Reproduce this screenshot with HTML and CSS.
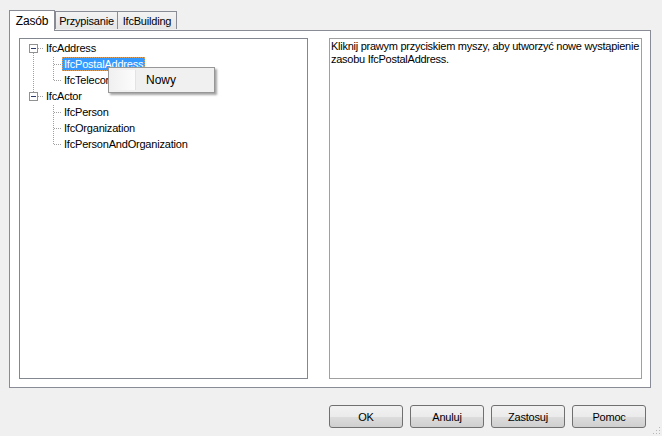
FILE: index.html
```html
<!DOCTYPE html>
<html>
<head>
    <meta charset="utf-8">
    <title>Zasób</title>
    <link rel="stylesheet" href="styles.css">
</head>
<body>
    <div class="dialog">
        <div class="tabs">
            <div class="tab active tab-zasob">Zasób</div>
            <div class="tab tab-przyp">Przypisanie</div>
            <div class="tab tab-bldg">IfcBuilding</div>
        </div>
        <div class="panel">
            <div class="tree">
                <svg class="tree-lines" width="120" height="120" viewBox="0 0 120 120">
                    <g stroke="#a0a0a0" stroke-dasharray="1,1" shape-rendering="crispEdges">
                        <line x1="13.5" y1="14" x2="13.5" y2="53"/>
                        <line x1="18" y1="9.5" x2="24" y2="9.5"/>
                        <line x1="18" y1="57.5" x2="24" y2="57.5"/>
                        <line x1="33.5" y1="18" x2="33.5" y2="42"/>
                        <line x1="34" y1="25.5" x2="42" y2="25.5"/>
                        <line x1="34" y1="41.5" x2="42" y2="41.5"/>
                        <line x1="33.5" y1="66" x2="33.5" y2="106"/>
                        <line x1="34" y1="73.5" x2="42" y2="73.5"/>
                        <line x1="34" y1="89.5" x2="42" y2="89.5"/>
                        <line x1="34" y1="105.5" x2="42" y2="105.5"/>
                    </g>
                    <g shape-rendering="crispEdges">
                        <rect x="9.5" y="5.5" width="8" height="8" fill="#fff" stroke="#919191"/>
                        <line x1="11" y1="9.5" x2="16" y2="9.5" stroke="#2a3a6a"/>
                        <rect x="9.5" y="53.5" width="8" height="8" fill="#fff" stroke="#919191"/>
                        <line x1="11" y1="57.5" x2="16" y2="57.5" stroke="#2a3a6a"/>
                    </g>
                </svg>
                <div class="node root"><span class="label">IfcAddress</span></div>
                <div class="node child"><span class="label selected">IfcPostalAddress</span></div>
                <div class="node child"><span class="label">IfcTelecomAddress</span></div>
                <div class="node root"><span class="label">IfcActor</span></div>
                <div class="node child"><span class="label">IfcPerson</span></div>
                <div class="node child"><span class="label">IfcOrganization</span></div>
                <div class="node child"><span class="label">IfcPersonAndOrganization</span></div>

                <div class="menu">
                    <div class="menu-item">
                        <span class="gutter"></span>
                        <span class="menu-text">Nowy</span>
                    </div>
                </div>
            </div>
            <div class="description">
                Kliknij prawym przyciskiem myszy, aby utworzyć nowe wystąpienie<br>zasobu IfcPostalAddress.
            </div>
        </div>
        <div class="buttons">
            <button class="btn">OK</button>
            <button class="btn">Anuluj</button>
            <button class="btn">Zastosuj</button>
            <button class="btn">Pomoc</button>
        </div>
    </div>
    <svg class="grip" width="12" height="12" viewBox="0 0 12 12">
        <g fill="#b8b8b8">
            <rect x="9" y="3" width="1" height="1"/>
            <rect x="6" y="6" width="1" height="1"/>
            <rect x="9" y="6" width="1" height="1"/>
            <rect x="3" y="9" width="1" height="1"/>
            <rect x="6" y="9" width="1" height="1"/>
            <rect x="9" y="9" width="1" height="1"/>
        </g>
    </svg>
</body>
</html>
```

FILE: styles.css
```css
html, body {
    margin: 0;
    padding: 0;
}
body {
    width: 662px;
    height: 436px;
    background-color: #f0f0f0;
    font-family: "Liberation Sans", Arial, sans-serif;
    font-size: 11px;
    letter-spacing: -0.2px;
    color: #000;
    overflow: hidden;
    position: relative;
}
.dialog {
    padding: 10px 0 0 9px;
}
.tabs {
    display: flex;
    align-items: flex-end;
    height: 20px;
}
.tab {
    box-sizing: border-box;
    height: 18px;
    border: 1px solid #898c95;
    border-bottom: none;
    background: linear-gradient(#f3f3f3, #e6e6e6);
    display: flex;
    align-items: center;
    justify-content: center;
    margin-bottom: 1px;
}
.tab.active {
    height: 21px;
    margin-bottom: -1px;
    background: #fff;
    position: relative;
    z-index: 2;
    font-size: 12px;
}
.tab-zasob {
    width: 46px;
}
.tab-przyp {
    width: 63px;
}
.tab-bldg {
    width: 59px;
    border-left: none;
}
.panel {
    box-sizing: border-box;
    width: 642px;
    height: 358px;
    border: 1px solid #898c95;
    background: #fff;
    padding: 7px 8px 8px 9px;
    display: flex;
    gap: 21px;
}
.tree {
    box-sizing: border-box;
    width: 289px;
    height: 341px;
    border: 1px solid #828790;
    padding-top: 1px;
    position: relative;
}
.tree-lines {
    position: absolute;
    left: 0;
    top: 0;
}
.node {
    height: 16px;
    display: flex;
    align-items: center;
}
.node.root {
    padding-left: 24px;
}
.node.child {
    padding-left: 42px;
}
.label {
    box-sizing: border-box;
    height: 14px;
    line-height: 12px;
    padding: 0 1px;
    border: 1px solid transparent;
    white-space: nowrap;
}
.label.selected {
    background: #3399ff;
    color: #fff;
    border: 1px dotted #d9a060;
}
.menu {
    position: absolute;
    left: 88px;
    top: 28px;
    box-sizing: border-box;
    width: 107px;
    height: 26px;
    border: 1px solid #979797;
    background: #f0f0f0;
    box-shadow: 2px 2px 2px rgba(0, 0, 0, 0.35);
    padding: 2px;
    z-index: 3;
}
.menu-item {
    display: flex;
    height: 20px;
    align-items: center;
}
.gutter {
    width: 24px;
    height: 20px;
    background: linear-gradient(90deg, #f1f1f1, #fcfcfc);
    border-right: 1px solid #e2e3e3;
}
.menu-text {
    font-size: 12px;
    letter-spacing: 0;
    margin-left: 10px;
}
.description {
    box-sizing: border-box;
    width: 313px;
    height: 341px;
    border: 1px solid #a0a0a0;
    padding: 1px 1px;
    line-height: 13px;
    letter-spacing: -0.26px;
    white-space: nowrap;
    overflow: hidden;
}
.buttons {
    display: flex;
    justify-content: flex-end;
    gap: 7px;
    margin-top: 17px;
    padding-right: 16px;
}
.btn {
    box-sizing: border-box;
    width: 74px;
    height: 23px;
    border: 1px solid #707070;
    border-radius: 3px;
    background: linear-gradient(#f2f2f2 0%, #ebebeb 50%, #dddddd 51%, #cfcfcf 100%);
    font-family: "Liberation Sans", Arial, sans-serif;
    font-size: 11px;
    letter-spacing: -0.2px;
    color: #000;
    padding: 0;
}
.grip {
    position: absolute;
    right: 0;
    bottom: 0;
}
```
